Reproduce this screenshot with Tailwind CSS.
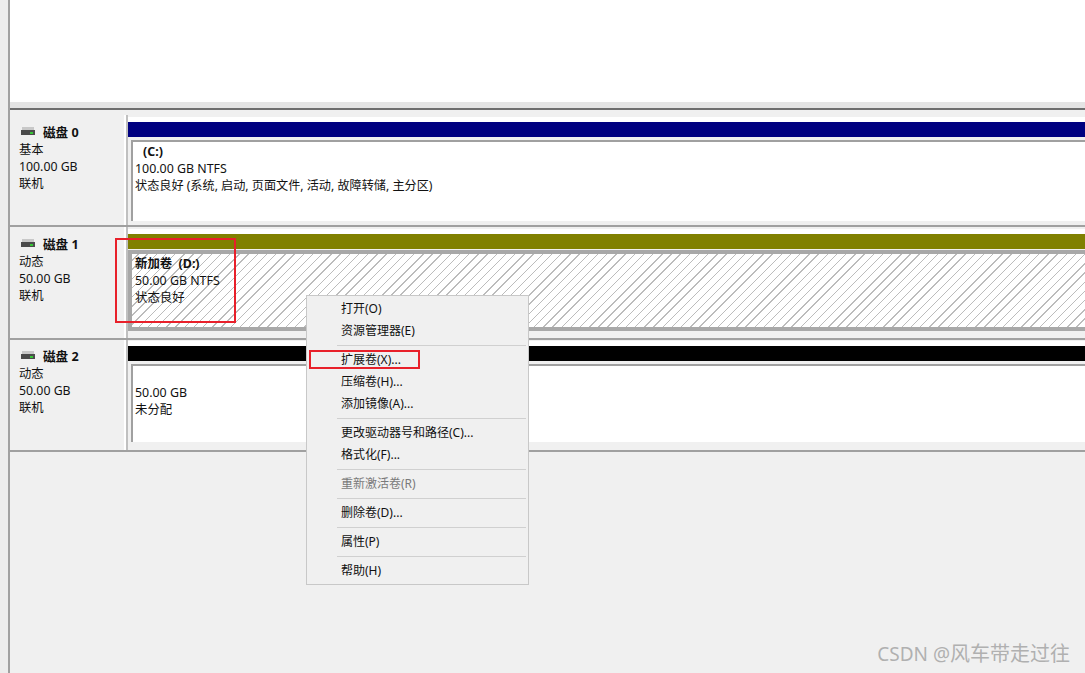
<!DOCTYPE html>
<html lang="zh-CN">
<head>
<meta charset="UTF-8">
<title>磁盘管理</title>
<script src="https://cdn.jsdelivr.net/npm/@tailwindcss/browser@4"></script>
</head>
<body class="bg-[#f0f0f0] overflow-hidden">
<div class="relative w-[1085px] h-[673px] flex font-['Noto_Sans','Noto_Sans_CJK_SC',sans-serif] text-[12px] leading-[17px] text-[#111]">

  <!-- window edge -->
  <div class="w-[10px] h-full shrink-0 bg-[#ececec] border-r-2 border-[#a0a0a0]"></div>

  <div class="flex-1 min-w-0 flex flex-col">
    <!-- volume list, empty -->
    <div class="h-[102px] bg-white shrink-0"></div>
    <div class="h-[8px] bg-[#e4e4e4] border-b-2 border-[#6e6e6e] shrink-0"></div>
    <div class="h-[5px] shrink-0"></div>

    <!-- disk 0 -->
    <div class="h-[112px] flex border-b-2 border-[#a0a0a0] shrink-0">
      <div class="w-[116px] pl-[9px] pt-[9px] border-r-2 border-white text-[12.3px]">
        <div class="flex items-center gap-[8px] h-[17px] font-bold text-[12.6px]">
          <svg class="ml-[2px] -mt-[2px]" width="14" height="9" viewBox="0 0 14 9"><rect x="1" y="0" width="12" height="3" fill="#c8c8c8"/><rect x="0" y="3" width="14" height="5" fill="#4a4a4a"/><rect x="9" y="5" width="3" height="2" fill="#35c435"/></svg>
          <span>磁盘 0</span>
        </div>
        <div>基本</div>
        <div>100.00 GB</div>
        <div>联机</div>
      </div>
      <div class="flex-1 min-w-0 pt-[2px] border-l-2 border-[#c0c0c0]">
        <div class="h-[5px] bg-white"></div>
        <div class="h-[15px] bg-[#000080]"></div>
        <div class="mt-[3px] ml-[3px] h-[81px] bg-white border-l-2 border-t-2 border-[#a0a0a0] pl-[2px] pt-[1px] text-[12.4px]">
          <div class="font-bold pl-[8px]">(C:)</div>
          <div>100.00 GB NTFS</div>
          <div class="text-[12.15px]">状态良好 (系统, 启动, 页面文件, 活动, 故障转储, 主分区)</div>
        </div>
      </div>
    </div>

    <!-- disk 1 -->
    <div class="h-[113px] flex border-b-2 border-[#a0a0a0] shrink-0">
      <div class="w-[116px] pl-[9px] pt-[9px] border-r-2 border-white text-[12.3px]">
        <div class="flex items-center gap-[8px] h-[17px] font-bold text-[12.6px]">
          <svg class="ml-[2px] -mt-[2px]" width="14" height="9" viewBox="0 0 14 9"><rect x="1" y="0" width="12" height="3" fill="#c8c8c8"/><rect x="0" y="3" width="14" height="5" fill="#4a4a4a"/><rect x="9" y="5" width="3" height="2" fill="#35c435"/></svg>
          <span>磁盘 1</span>
        </div>
        <div>动态</div>
        <div>50.00 GB</div>
        <div>联机</div>
      </div>
      <div class="flex-1 min-w-0 pt-[2px] border-l-2 border-[#c0c0c0]">
        <div class="h-[5px] bg-white"></div>
        <div class="h-[15px] bg-[#808000]"></div>
        <div class="mt-[1px] h-[81px] border-l-4 border-y-4 border-[#a8a8a8] pl-[3px] pt-[1px] text-[12.4px] bg-[repeating-linear-gradient(-45deg,#ffffff,#ffffff_5.5px,#bcbcbc_5.5px,#bcbcbc_6.5px)]">
          <div class="font-bold">新加卷 &nbsp;(D:)</div>
          <div>50.00 GB NTFS</div>
          <div>状态良好</div>
        </div>
      </div>
    </div>

    <!-- disk 2 -->
    <div class="h-[112px] flex border-b-2 border-[#a0a0a0] shrink-0">
      <div class="w-[116px] pl-[9px] pt-[8px] border-r-2 border-white text-[12.3px]">
        <div class="flex items-center gap-[8px] h-[17px] font-bold text-[12.6px]">
          <svg class="ml-[2px] -mt-[2px]" width="14" height="9" viewBox="0 0 14 9"><rect x="1" y="0" width="12" height="3" fill="#c8c8c8"/><rect x="0" y="3" width="14" height="5" fill="#4a4a4a"/><rect x="9" y="5" width="3" height="2" fill="#35c435"/></svg>
          <span>磁盘 2</span>
        </div>
        <div>动态</div>
        <div>50.00 GB</div>
        <div>联机</div>
      </div>
      <div class="flex-1 min-w-0 pt-[1px] border-l-2 border-[#c0c0c0]">
        <div class="h-[5px] bg-white"></div>
        <div class="h-[15px] bg-black"></div>
        <div class="mt-[3px] ml-[3px] h-[78px] bg-white border-l-2 border-t-2 border-[#a0a0a0] pl-[2px] pt-[18px] text-[12.4px]">
          <div>50.00 GB</div>
          <div>未分配</div>
        </div>
      </div>
    </div>
  </div>

  <!-- context menu -->
  <div class="absolute left-[306px] top-[295px] w-[223px] h-[290px] bg-[#f0f0f0] border border-[#c8c8c8] pt-[1px] px-[2px]">
    <div class="h-[22px] pl-[32px] flex items-center">打开(O)</div>
    <div class="h-[22px] pl-[32px] flex items-center">资源管理器(E)</div>
    <div class="h-[7px] ml-[28px] pt-[1px] flex items-center"><div class="h-px w-full bg-[#d0d0d0]"></div></div>
    <div class="h-[22px] pl-[32px] flex items-center">扩展卷(X)...</div>
    <div class="h-[22px] pl-[32px] flex items-center">压缩卷(H)...</div>
    <div class="h-[22px] pl-[32px] flex items-center">添加镜像(A)...</div>
    <div class="h-[7px] ml-[28px] pt-[1px] flex items-center"><div class="h-px w-full bg-[#d0d0d0]"></div></div>
    <div class="h-[22px] pl-[32px] flex items-center">更改驱动器号和路径(C)...</div>
    <div class="h-[22px] pl-[32px] flex items-center">格式化(F)...</div>
    <div class="h-[7px] ml-[28px] pt-[1px] flex items-center"><div class="h-px w-full bg-[#d0d0d0]"></div></div>
    <div class="h-[22px] pl-[32px] flex items-center text-[#7a7a7a]">重新激活卷(R)</div>
    <div class="h-[7px] ml-[28px] pt-[1px] flex items-center"><div class="h-px w-full bg-[#d0d0d0]"></div></div>
    <div class="h-[22px] pl-[32px] flex items-center">删除卷(D)...</div>
    <div class="h-[7px] ml-[28px] pt-[1px] flex items-center"><div class="h-px w-full bg-[#d0d0d0]"></div></div>
    <div class="h-[22px] pl-[32px] flex items-center">属性(P)</div>
    <div class="h-[7px] ml-[28px] pt-[1px] flex items-center"><div class="h-px w-full bg-[#d0d0d0]"></div></div>
    <div class="h-[22px] pl-[32px] flex items-center">帮助(H)</div>
  </div>

  <!-- red annotations -->
  <div class="absolute left-[115px] top-[238px] w-[121px] h-[85px] border-2 border-[#e8202a]"></div>
  <div class="absolute left-[309px] top-[350px] w-[111px] h-[19px] border-2 border-[#e8202a]"></div>

  <!-- watermark -->
  <div class="absolute right-[15px] top-[640px] text-[20px] leading-[28px] text-[#b0b0b0]"><span class="text-[19px]">CSDN @</span>风车带走过往</div>
</div>
</body>
</html>
